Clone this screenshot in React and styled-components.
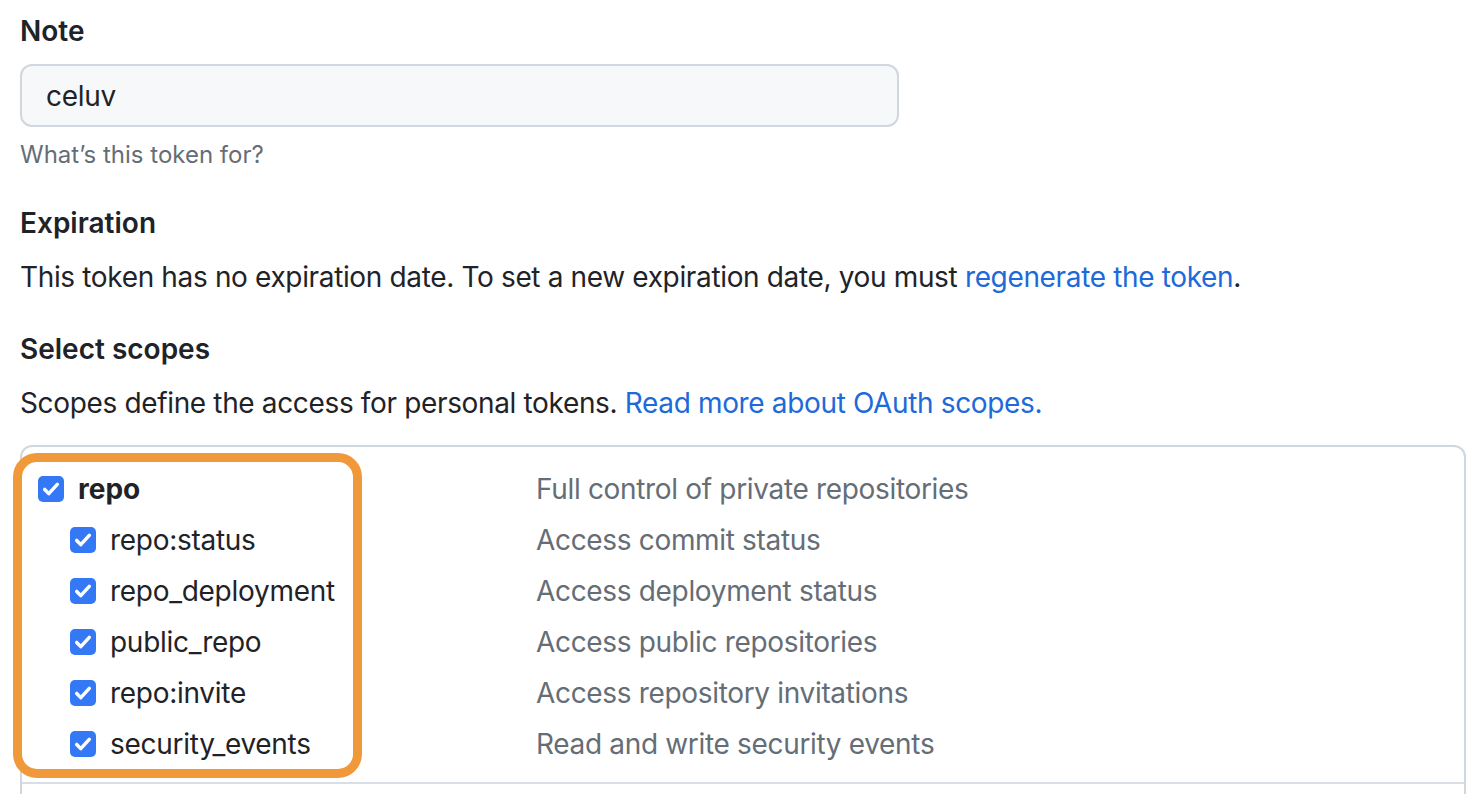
import styled, { createGlobalStyle } from 'styled-components'

const GlobalStyle = createGlobalStyle`
  html, body {
    margin: 0;
    padding: 0;
    background: #ffffff;
    overflow: hidden;
  }
  body {
    font-family: Inter, "Noto Sans", "Liberation Sans", sans-serif;
    color: #1f2328;
  }
`

const Page = styled.div`
  display: flex;
  flex-direction: column;
  padding: 10px 0 0 20px;
`

const Heading = styled.div`
  font-size: 28px;
  line-height: 42px;
  font-weight: 600;
  margin-top: ${p => p.$gap || 0}px;
`

const NoteInput = styled.div`
  box-sizing: border-box;
  width: 879px;
  height: 63px;
  margin-top: 12px;
  padding: 0 24px;
  display: flex;
  align-items: center;
  background: #f6f8fa;
  border: 2px solid #d0d7de;
  border-radius: 12px;
  font-size: 28px;
  letter-spacing: -0.3px;
`

const Hint = styled.div`
  font-size: 24px;
  line-height: 36px;
  color: #656d76;
  margin-top: 10px;
`

const Text = styled.p`
  margin: 12px 0 0;
  font-size: 28px;
  line-height: 42px;
  letter-spacing: -0.35px;
`

const Link = styled.a`
  color: #2069d8;
  text-decoration: none;
`

const ScopeBox = styled.div`
  position: relative;
  box-sizing: border-box;
  width: 1446px;
  margin-top: 21px;
  border: 2px solid #d0d7de;
  border-radius: 12px;
  padding-bottom: 40px;
`

const Group = styled.div`
  padding: 16px 0 13px;
  border-bottom: 2px solid #d8dee4;
`

const Row = styled.div`
  display: grid;
  grid-template-columns: 514px 1fr;
  height: 51px;
  align-items: center;
`

const Scope = styled.label`
  display: flex;
  align-items: center;
  gap: 14px;
  padding-left: ${p => 16 + (p.$child ? 32 : 0)}px;
  font-size: 28px;
  font-weight: ${p => (p.$child ? 400 : 700)};
  letter-spacing: ${p => (p.$child ? '-0.28px' : '0')};
`

const Box = styled.span`
  width: 26px;
  height: 26px;
  border-radius: 5px;
  background: #3478f6;
  display: flex;
  align-items: center;
  justify-content: center;
  flex-shrink: 0;
`

const Desc = styled.span`
  font-size: 28px;
  color: #656d76;
  letter-spacing: -0.33px;
`

const Highlight = styled.div`
  position: absolute;
  left: -9px;
  top: 6px;
  width: 349px;
  height: 325px;
  box-sizing: border-box;
  border: 9px solid #f0993a;
  border-radius: 24px;
  pointer-events: none;
`

const Check = () => (
  <Box>
    <svg width="24" height="24" viewBox="0 0 16 16">
      <path
        d="M3.8 8.3l2.7 2.8L12.2 4.9"
        fill="none"
        stroke="#ffffff"
        strokeWidth="2.3"
        strokeLinecap="round"
        strokeLinejoin="round"
      />
    </svg>
  </Box>
)

const scopes = [
  { name: 'repo', desc: 'Full control of private repositories' },
  { name: 'repo:status', desc: 'Access commit status', child: true },
  { name: 'repo_deployment', desc: 'Access deployment status', child: true },
  { name: 'public_repo', desc: 'Access public repositories', child: true },
  { name: 'repo:invite', desc: 'Access repository invitations', child: true },
  { name: 'security_events', desc: 'Read and write security events', child: true },
]

export default function App() {
  return (
    <Page>
      <GlobalStyle />
      <Heading>Note</Heading>
      <NoteInput>celuv</NoteInput>
      <Hint>What’s this token for?</Hint>

      <Heading $gap={29}>Expiration</Heading>
      <Text>
        This token has no expiration date. To set a new expiration date, you must{' '}
        <Link href="#">regenerate the token</Link>.
      </Text>

      <Heading $gap={30}>Select scopes</Heading>
      <Text>
        Scopes define the access for personal tokens.{' '}
        <Link href="#">Read more about OAuth scopes.</Link>
      </Text>

      <ScopeBox>
        <Group>
          {scopes.map(s => (
            <Row key={s.name}>
              <Scope $child={s.child}>
                <Check />
                {s.name}
              </Scope>
              <Desc>{s.desc}</Desc>
            </Row>
          ))}
        </Group>
        <Highlight />
      </ScopeBox>
    </Page>
  )
}
